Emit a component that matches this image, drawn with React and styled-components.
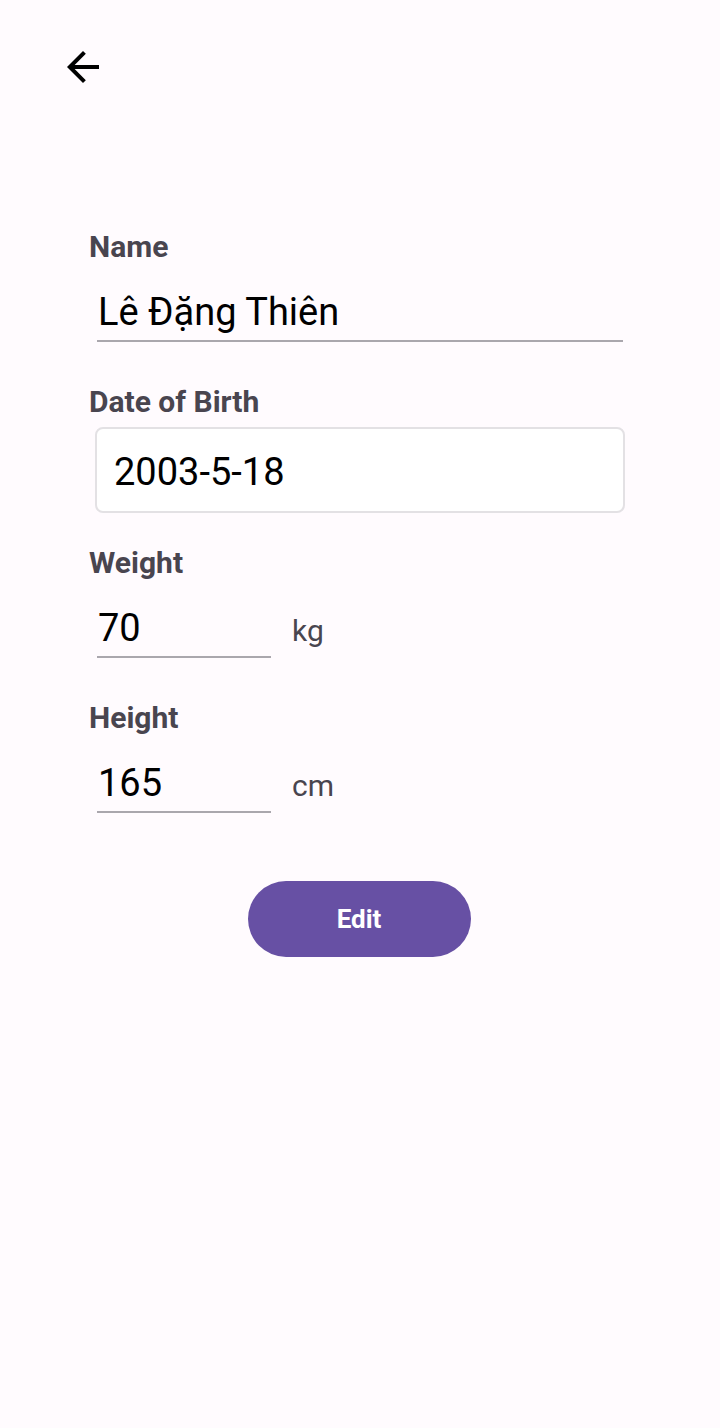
import React from "react";
import styled, { createGlobalStyle } from "styled-components";

const Global = createGlobalStyle`
  html, body { margin: 0; padding: 0; background: #fffbfe; }
  body { font-family: Roboto, "Noto Sans", sans-serif; }
  * { box-sizing: border-box; }
`;

const Page = styled.div`
  width: 720px;
  min-height: 1428px;
  background: #fffbfe;
  display: flex;
  flex-direction: column;
`;

const TopBar = styled.div`
  padding: 43px 0 0 59px;
  height: 91px;
`;

const BackButton = styled.button`
  width: 48px;
  height: 48px;
  padding: 0;
  border: none;
  background: transparent;
  display: flex;
  align-items: center;
  justify-content: center;
  cursor: pointer;
`;

const Form = styled.div`
  margin: 138px 0 0 89px;
  width: 538px;
  display: flex;
  flex-direction: column;
`;

const Label = styled.div`
  font-size: 30px;
  font-weight: 700;
  color: #49454f;
  line-height: 35px;
  margin-top: ${(p) => p.$top || 0}px;
`;

const UnderlineField = styled.div`
  margin: 26px 0 0 8px;
  width: ${(p) => p.$width};
  font-size: 38px;
  line-height: 44px;
  color: #000;
  padding: 0 0 6px 1px;
  border-bottom: 2px solid #aaa7ad;
`;

const BoxField = styled.div`
  margin: 8px 0 0 6px;
  width: 530px;
  height: 86px;
  background: #fff;
  border: 2px solid #e3e1e4;
  border-radius: 8px;
  display: flex;
  align-items: center;
  padding: 3px 0 0 17px;
  font-size: 38px;
  color: #000;
`;

const Row = styled.div`
  display: flex;
  align-items: baseline;
  gap: 21px;
`;

const Unit = styled.span`
  font-size: 30px;
  color: #49454f;
`;

const ButtonRow = styled.div`
  display: flex;
  justify-content: center;
  margin-top: 68px;
  padding-left: 2px;
`;

const EditButton = styled.button`
  width: 223px;
  height: 76px;
  border: none;
  border-radius: 38px;
  background: #6750a4;
  color: #fff;
  font-family: Roboto, "Noto Sans", sans-serif;
  font-size: 26px;
  font-weight: 700;
  cursor: pointer;
`;

export default function App() {
  return (
    <Page>
      <Global />
      <TopBar>
        <BackButton aria-label="Back">
          <svg width="48" height="48" viewBox="0 0 24 24">
            <path
              d="M20 11H7.83l5.59-5.59L12 4l-8 8 8 8 1.41-1.41L7.83 13H20v-2z"
              fill="#000"
            />
          </svg>
        </BackButton>
      </TopBar>
      <Form>
        <Label>Name</Label>
        <UnderlineField $width="526px">Lê Đặng Thiên</UnderlineField>

        <Label $top={42}>Date of Birth</Label>
        <BoxField>2003-5-18</BoxField>

        <Label $top={32}>Weight</Label>
        <Row>
          <UnderlineField $width="174px">70</UnderlineField>
          <Unit>kg</Unit>
        </Row>

        <Label $top={42}>Height</Label>
        <Row>
          <UnderlineField $width="174px">165</UnderlineField>
          <Unit>cm</Unit>
        </Row>

        <ButtonRow>
          <EditButton>Edit</EditButton>
        </ButtonRow>
      </Form>
    </Page>
  );
}
